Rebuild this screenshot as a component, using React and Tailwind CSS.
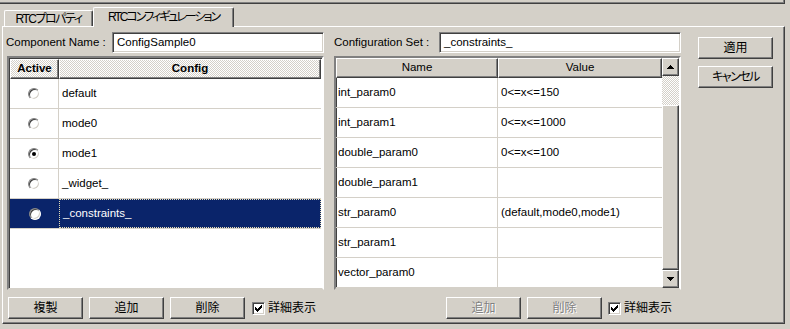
import React from "react";

const FONT =
  "font-['Liberation_Sans','Noto_Sans_CJK_JP',sans-serif] [font-feature-settings:'palt']";

const RAISED =
  "border border-t-white border-l-white border-r-[#404040] border-b-[#404040] shadow-[inset_-1px_-1px_#808080]";
const SUNKEN =
  "border border-t-[#808080] border-l-[#808080] border-r-white border-b-white shadow-[inset_1px_1px_#404040,inset_-1px_-1px_#d4d0c8]";

function Btn({ children, disabled, tight }) {
  return (
    <div
      className={`h-[22px] w-[75px] shrink-0 flex items-center justify-center whitespace-nowrap bg-[#d4d0c8] text-[12px] ${RAISED} ${
        tight ? "tracking-[-1.5px]" : ""
      } ${disabled ? "text-[#808080] [text-shadow:1px_1px_0_#ffffff]" : "text-black"}`}
    >
      {children}
    </div>
  );
}

function Check() {
  return (
    <div className={`w-[13px] h-[13px] shrink-0 bg-white flex items-center justify-center ${SUNKEN}`}>
      <svg width="7" height="7" viewBox="0 0 7 7" shapeRendering="crispEdges">
        <path
          d="M6 0h1v3h-1v1h-1v1h-1v1h-1v1h-1v-1h-1v-1h-1v-3h1v1h1v1h1v-1h1v-1h1z"
          fill="#000"
        />
      </svg>
    </div>
  );
}

function Radio({ checked }) {
  return (
    <div className="w-[12px] h-[12px] rounded-full bg-white flex items-center justify-center border border-t-[#808080] border-l-[#808080] border-r-white border-b-white shadow-[inset_1px_1px_#404040,inset_-1px_-1px_#d4d0c8]">
      {checked && <div className="w-[4px] h-[4px] rounded-full bg-black" />}
    </div>
  );
}

const configs = [
  { name: "default", checked: false },
  { name: "mode0", checked: false },
  { name: "mode1", checked: true },
  { name: "_widget_", checked: false },
  { name: "_constraints_", checked: false, selected: true },
];

const params = [
  ["int_param0", "0<=x<=150"],
  ["int_param1", "0<=x<=1000"],
  ["double_param0", "0<=x<=100"],
  ["double_param1", ""],
  ["str_param0", "(default,mode0,mode1)"],
  ["str_param1", ""],
  ["vector_param0", ""],
];

function ArrowBtn({ up }) {
  return (
    <div className={`w-[17px] h-[18px] shrink-0 bg-[#d4d0c8] flex items-center justify-center ${RAISED}`}>
      <svg width="7" height="4" viewBox="0 0 7 4" shapeRendering="crispEdges">
        {up ? (
          <path d="M3 0h1v1h1v1h1v1h1v1h-7v-1h1v-1h1v-1h1z" fill="#000" />
        ) : (
          <path d="M0 0h7v1h-1v1h-1v1h-1v1h-1v-1h-1v-1h-1v-1h-1z" fill="#000" />
        )}
      </svg>
    </div>
  );
}

export default function App() {
  return (
    <div className={`w-[790px] h-[329px] bg-[#d4d0c8] overflow-hidden text-[11.5px] text-black ${FONT}`}>
      {/* bottom of upper panel */}
      <div className="h-[4px] w-[785px] border-r border-b border-[#404040] shadow-[inset_-1px_-1px_#808080]" />

      {/* tabs */}
      <div className="h-[22px] flex items-end pl-[4px]">
        <div className="w-[89px] h-[16px] flex items-center justify-center whitespace-nowrap text-[12px] tracking-[-1.5px] border-t border-l border-r border-t-white border-l-white border-r-[#404040] shadow-[inset_-1px_0_#808080] rounded-t-[2px] leading-none">
          RTCプロパティ
        </div>
        <div className="relative z-10 -mb-px w-[141px] h-[20px] bg-[#d4d0c8] flex items-center justify-center whitespace-nowrap text-[12px] tracking-[-2px] border-t border-l border-r border-t-white border-l-white border-r-[#404040] shadow-[inset_-1px_0_#808080] rounded-t-[2px] leading-none pb-[2px]">
          RTCコンフィギュレーション
        </div>
      </div>

      {/* tab panel */}
      <div className="ml-[2px] w-[783px] h-[298px] flex border border-t-white border-l-white border-r-[#404040] border-b-[#404040] shadow-[inset_-1px_-1px_#808080]">
        {/* left column */}
        <div className="ml-[4px] w-[317px] flex flex-col pt-[5px]">
          <div className="flex items-center h-[21px]">
            <div className="w-[106px] -ml-px whitespace-nowrap">Component Name :</div>
            <div className={`flex-1 h-[21px] bg-white flex items-center pl-[4px] ${SUNKEN}`}>ConfigSample0</div>
          </div>

          <div className="mt-[3px] h-[234px] bg-white border-2 border-t-[#808080] border-l-[#808080] border-r-white border-b-[#d4d0c8] shadow-[inset_1px_1px_#404040] p-[1px] flex flex-col">
            <div className="flex h-[20px] shrink-0 font-bold bg-[repeating-conic-gradient(#d4d0c8_0_25%,#ffffff_0_50%)] bg-[length:2px_2px]">
              <div className={`w-[49px] flex items-center justify-center ${RAISED}`}>Active</div>
              <div className={`flex-1 flex items-center justify-center ${RAISED}`}>Config</div>
            </div>
            {configs.map((c) => (
              <div
                key={c.name}
                className={`flex h-[30px] shrink-0 border-b border-[#d4d0c8] ${c.selected ? "bg-[#0a246a] text-white" : ""}`}
              >
                <div className={`w-[49px] flex items-center justify-center ${c.selected ? "" : "border-r border-[#d4d0c8]"}`}>
                  <Radio checked={c.checked} />
                </div>
                <div
                  className={`flex-1 flex items-center pl-[3px] ${
                    c.selected ? "border border-dotted border-[#e4dcb4]" : ""
                  }`}
                >
                  {c.name}
                </div>
              </div>
            ))}
          </div>

          <div className="mt-[7px] flex items-center pl-[1px]">
            <Btn>複製</Btn>
            <div className="w-[6px]" />
            <Btn>追加</Btn>
            <div className="w-[6px]" />
            <Btn>削除</Btn>
            <div className="w-[7px]" />
            <Check />
            <div className="ml-[3px] whitespace-nowrap text-[12px]">詳細表示</div>
          </div>
        </div>

        {/* right column */}
        <div className="ml-[10px] w-[347px] flex flex-col pt-[5px]">
          <div className="flex items-center h-[21px]">
            <div className="w-[105px] whitespace-nowrap">Configuration Set :</div>
            <div className={`flex-1 h-[21px] bg-white flex items-center pl-[4px] ${SUNKEN}`}>_constraints_</div>
          </div>

          <div className="mt-[3px] h-[234px] bg-white border-2 border-t-[#808080] border-l-[#808080] border-r-white border-b-[#d4d0c8] shadow-[inset_1px_1px_#404040] flex">
            <div className="flex-1 flex flex-col">
              <div className="flex h-[20px] shrink-0 bg-[#d4d0c8]">
                <div className={`w-[162px] flex items-center justify-center ${RAISED}`}>Name</div>
                <div className={`flex-1 flex items-center justify-center ${RAISED}`}>Value</div>
              </div>
              {params.map(([n, v]) => (
                <div key={n} className="flex h-[30px] shrink-0 border-b border-[#d4d0c8]">
                  <div className="w-[162px] flex items-center pl-[2px] border-r border-[#d4d0c8]">{n}</div>
                  <div className="flex-1 flex items-center pl-[3px]">{v}</div>
                </div>
              ))}
            </div>
            <div className="w-[17px] flex flex-col">
              <ArrowBtn up />
              <div className="h-[29px] bg-[repeating-conic-gradient(#d4d0c8_0_25%,#ffffff_0_50%)] bg-[length:2px_2px]" />
              <div className={`flex-1 bg-[#d4d0c8] ${RAISED}`} />
              <ArrowBtn />
            </div>
          </div>

          <div className="mt-[7px] flex items-center pl-[112px]">
            <Btn disabled>追加</Btn>
            <div className="w-[6px]" />
            <Btn disabled>削除</Btn>
            <div className="w-[6px]" />
            <Check />
            <div className="ml-[3px] whitespace-nowrap text-[12px]">詳細表示</div>
          </div>
        </div>

        {/* right buttons */}
        <div className="ml-[17px] pt-[10px] flex flex-col gap-[7px]">
          <Btn>適用</Btn>
          <Btn tight>キャンセル</Btn>
        </div>
      </div>
    </div>
  );
}
